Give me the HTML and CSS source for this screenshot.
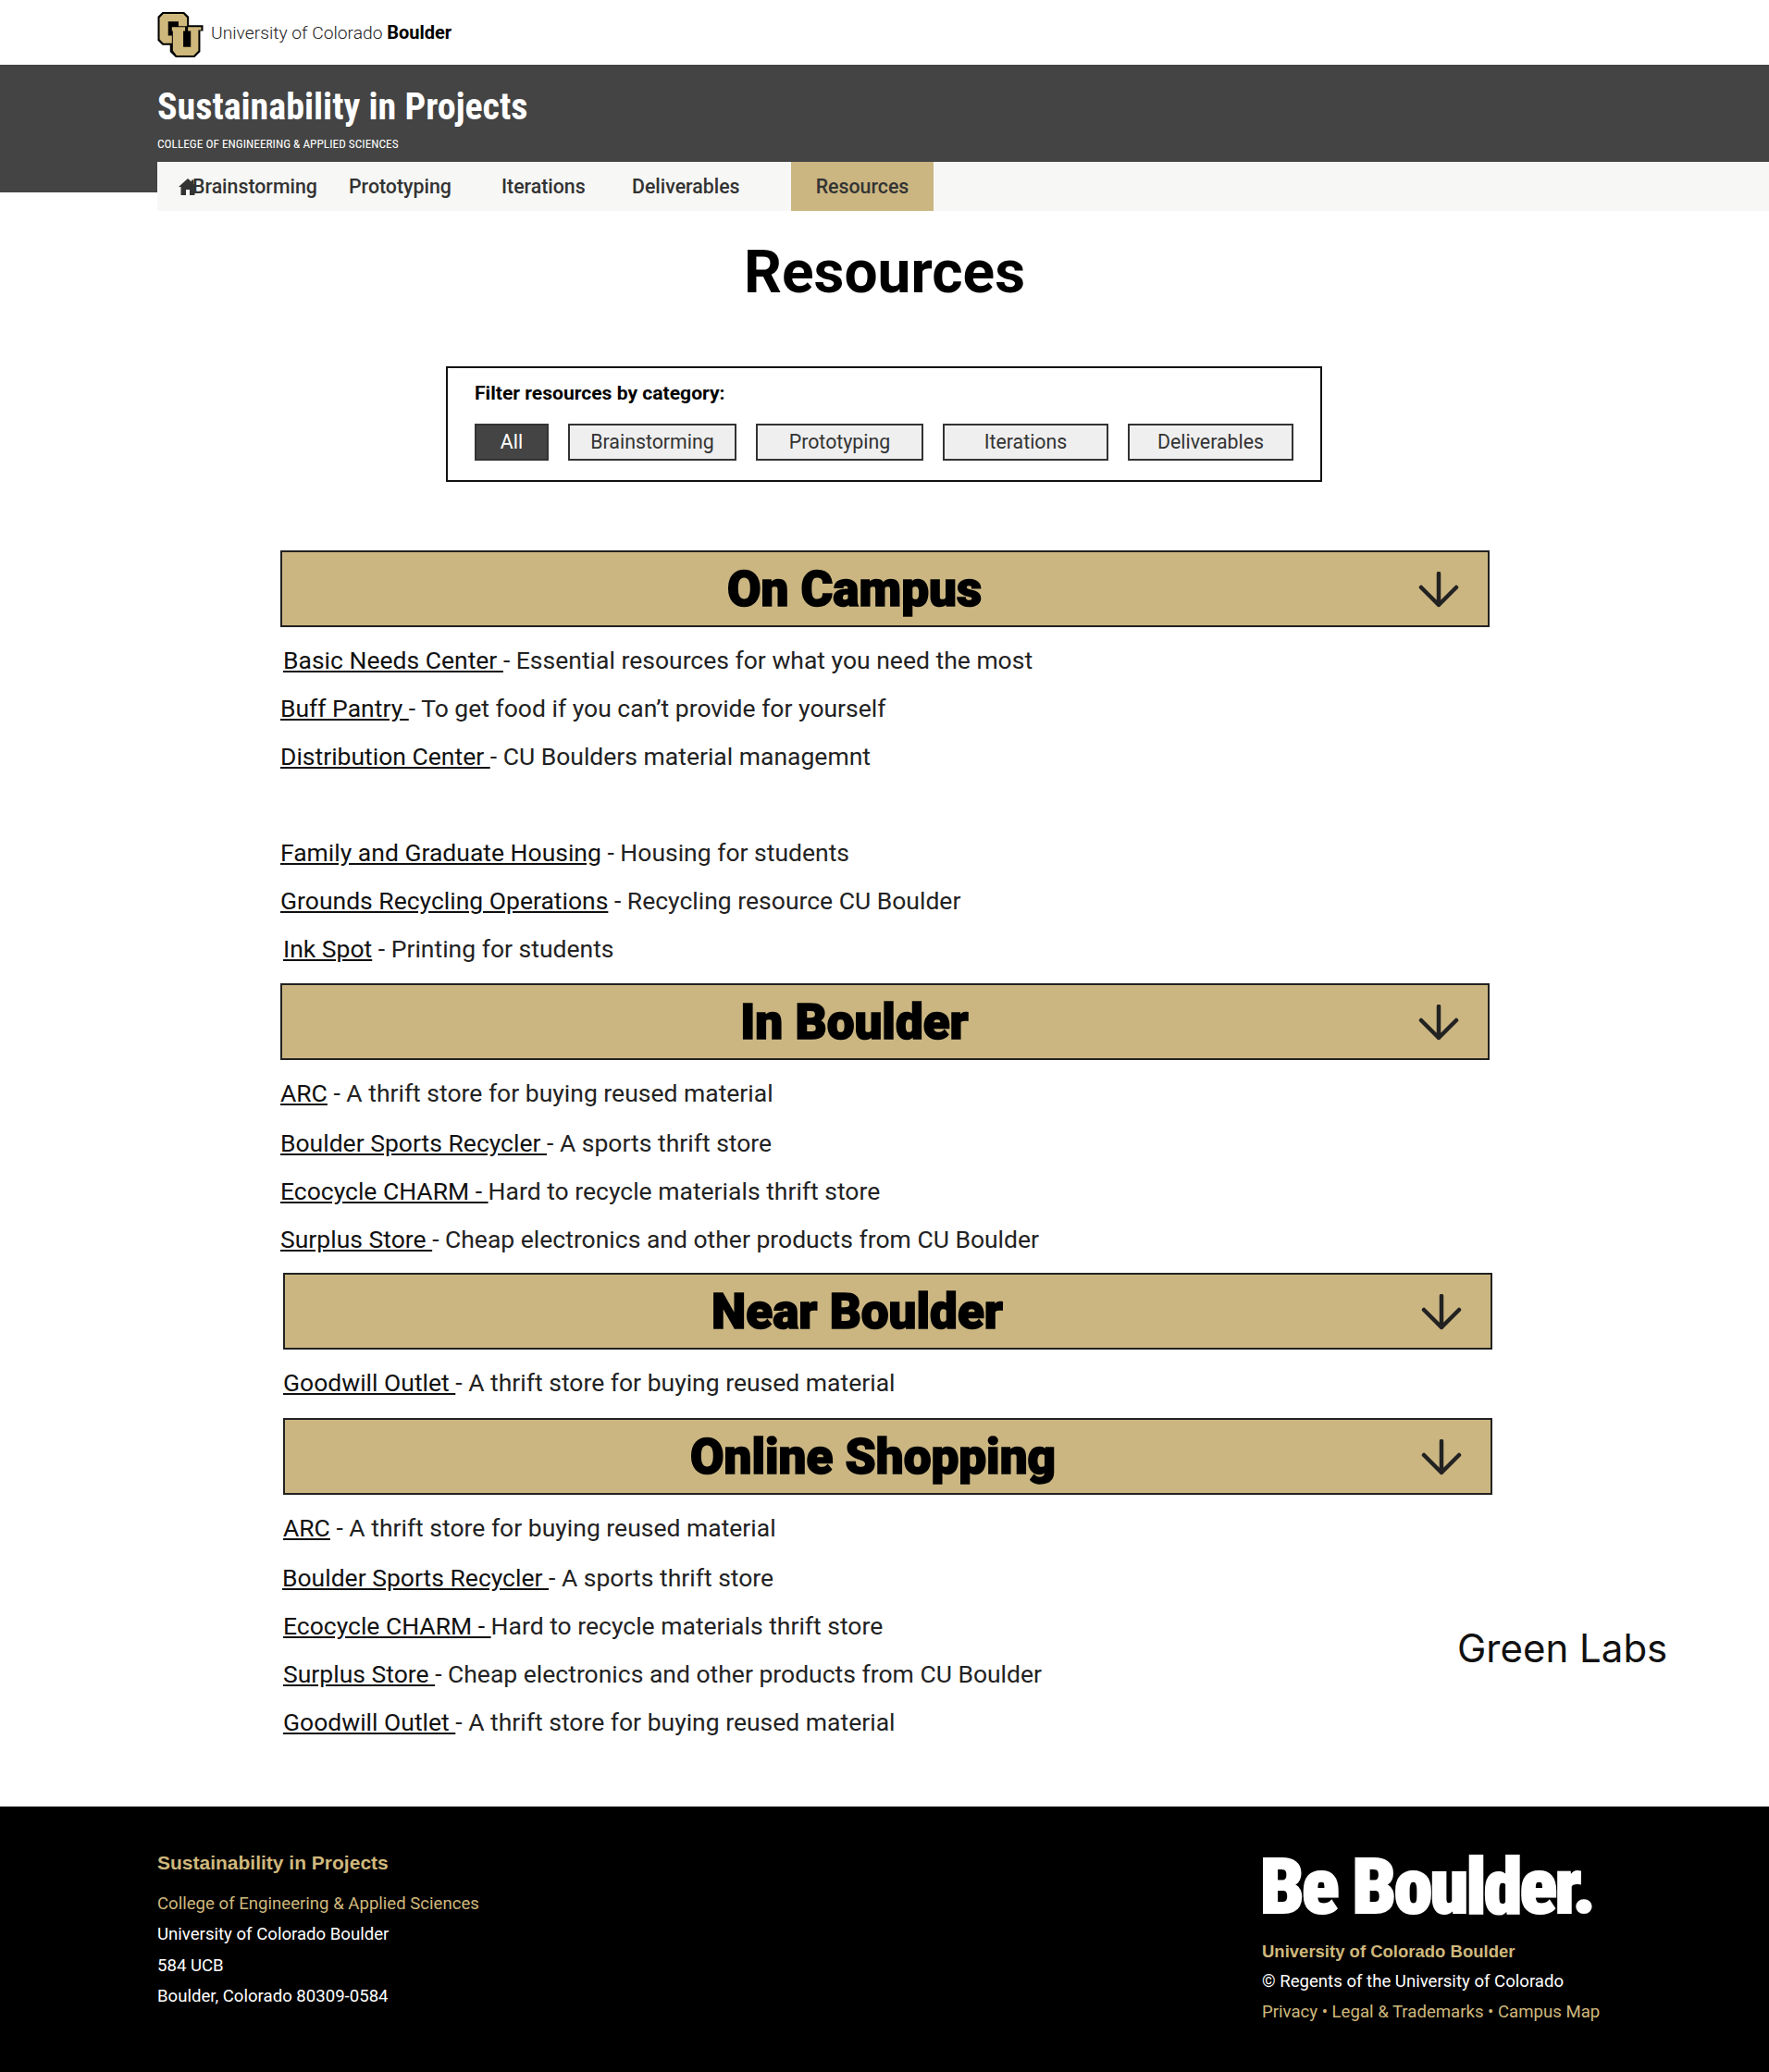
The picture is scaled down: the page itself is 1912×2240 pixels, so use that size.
FILE: index.html
```html
<!DOCTYPE html>
<html lang="en">
<head>
<meta charset="utf-8">
<title>Resources | Sustainability in Projects</title>
<link rel="stylesheet" href="styles.css">
</head>
<body>
<div class="brand-bar">
  <svg class="cu-logo" viewBox="0 0 48 48" aria-hidden="true">
    <path d="M5 0H28L33 5V14H48V20H45V42L39 48H19L13 42V35H5L0 30V5Z" fill="#000"/>
    <path d="M6 2H27L31 6V15H22V10H11V25H15V33H6L2 29V6Z" fill="#cfb87c"/>
    <path d="M15 16H29V20H27V37H35V20H32V16H46V19H43V41L38 46H20L16 41V20H15Z" fill="#cfb87c"/>
  </svg>
  <span class="brand-text">University of Colorado <b>Boulder</b></span>
</div>
<header class="site-head">
  <h2 class="site-title">Sustainability in Projects</h2>
  <p class="site-sub">COLLEGE OF ENGINEERING &amp; APPLIED SCIENCES</p>
</header>
<nav class="nav-row">
  <svg class="home" viewBox="0 0 20 18" aria-hidden="true"><path d="M10 0 14 3.600V1.500H16.500V5.800L20 9H17.500V18H12V12H8V18H2.500V9H0Z" fill="#333"/></svg>
  <a class="nav-a n1">Brainstorming</a>
  <a class="nav-a n2">Prototyping</a>
  <a class="nav-a n3">Iterations</a>
  <a class="nav-a n4">Deliverables</a>
  <a class="nav-a n5">Resources</a>
</nav>
<main class="page">
  <h1 class="page-title">Resources</h1>
  <div class="filter">
    <p class="filter-label">Filter resources by category:</p>
    <div class="filter-btns">
      <span class="btn on b-all">All</span>
      <span class="btn b-br">Brainstorming</span>
      <span class="btn b-pr">Prototyping</span>
      <span class="btn b-it">Iterations</span>
      <span class="btn b-de">Deliverables</span>
    </div>
  </div>

  <section class="sec sec-campus">
    <div class="bar"><h2>On Campus</h2><svg class="arrow" viewBox="0 0 44 40"><path d="M22 2v34M3 17l19 19 19-19" fill="none" stroke="#222" stroke-width="4.500" stroke-linecap="round" stroke-linejoin="round"/></svg></div>
    <p class="row in"><a>Basic Needs Center </a>- Essential resources for what you need the most</p>
    <p class="row"><a>Buff Pantry </a>- To get food if you can’t provide for yourself</p>
    <p class="row"><a>Distribution Center </a>- CU Boulders material managemnt</p>
    <p class="row blank">&nbsp;</p>
    <p class="row"><a>Family and Graduate Housing</a> - Housing for students</p>
    <p class="row"><a>Grounds Recycling Operations</a> - Recycling resource CU Boulder</p>
    <p class="row in"><a>Ink Spot</a> - Printing for students</p>
  </section>

  <section class="sec sec-town">
    <div class="bar"><h2>In Boulder</h2><svg class="arrow" viewBox="0 0 44 40"><path d="M22 2v34M3 17l19 19 19-19" fill="none" stroke="#222" stroke-width="4.500" stroke-linecap="round" stroke-linejoin="round"/></svg></div>
    <p class="row"><a>ARC</a> - A thrift store for buying reused material</p>
    <p class="row drop"><a>Boulder Sports Recycler </a>- A sports thrift store</p>
    <p class="row"><a>Ecocycle CHARM - </a>Hard to recycle materials thrift store</p>
    <p class="row"><a>Surplus Store </a>- Cheap electronics and other products from CU Boulder</p>
  </section>

  <section class="sec sec-near">
    <div class="bar"><h2>Near Boulder</h2><svg class="arrow" viewBox="0 0 44 40"><path d="M22 2v34M3 17l19 19 19-19" fill="none" stroke="#222" stroke-width="4.500" stroke-linecap="round" stroke-linejoin="round"/></svg></div>
    <p class="row"><a>Goodwill Outlet </a>- A thrift store for buying reused material</p>
  </section>

  <section class="sec sec-online">
    <div class="bar bar-wide"><h2>Online Shopping</h2><svg class="arrow" viewBox="0 0 44 40"><path d="M22 2v34M3 17l19 19 19-19" fill="none" stroke="#222" stroke-width="4.500" stroke-linecap="round" stroke-linejoin="round"/></svg></div>
    <p class="row"><a>ARC</a> - A thrift store for buying reused material</p>
    <p class="row drop out"><a>Boulder Sports Recycler </a>- A sports thrift store</p>
    <p class="row"><a>Ecocycle CHARM - </a>Hard to recycle materials thrift store</p>
    <p class="row"><a>Surplus Store </a>- Cheap electronics and other products from CU Boulder</p>
    <p class="row"><a>Goodwill Outlet </a>- A thrift store for buying reused material</p>
    <p class="green-labs">Green Labs</p>
  </section>
</main>
<footer class="foot">
  <div class="foot-l">
    <p class="foot-h">Sustainability in Projects</p>
    <p class="gold">College of Engineering &amp; Applied Sciences</p>
    <p>University of Colorado Boulder</p>
    <p>584 UCB</p>
    <p>Boulder, Colorado 80309-0584</p>
  </div>
  <div class="foot-r">
    <p class="be">Be Boulder.</p>
    <p class="foot-h2">University of Colorado Boulder</p>
    <p>© Regents of the University of Colorado</p>
    <p class="gold">Privacy • Legal &amp; Trademarks • Campus Map</p>
  </div>
</footer>
</body>
</html>
```
FILE: styles.css
```css
* { box-sizing: border-box; }
html, body { margin: 0; padding: 0; background: #fff; }
body { font-family: Roboto, "Liberation Sans", sans-serif; color: #111; width: 1912px; height: 2240px; overflow: hidden; }
p, h1, h2 { margin: 0; }

.brand-bar { height: 70px; padding-left: 170px; display: flex; align-items: center; gap: 8px; }
.cu-logo { width: 50px; height: 49px; margin-top: 4px; }
.brand-text { font-family: Roboto, sans-serif; font-weight: 300; font-size: 19.25px; color: #222; }
.brand-text b { color: #000; font-weight: 700; font-size: 20px; }

.site-head { height: 138px; margin-bottom: -33px; background: #444; padding: 24px 0 0 170px; color: #fff; }
.site-title { font-size: 40px; font-weight: 700; line-height: 44px; font-stretch: 75%; }
.site-sub { font-size: 13.33px; line-height: 14px; margin-top: 11px; font-stretch: 75%; }

.nav-row { position: relative; margin-left: 170px; height: 53px; background: #f7f7f5; display: flex; align-items: center; }
.home { position: absolute; left: 23px; top: 18px; width: 20px; height: 18px; }
.nav-a { font-size: 21.33px; font-weight: 500; color: #333; height: 53px; line-height: 53px; }
.n1 { margin-left: 38px; width: 169px; }
.n2 { width: 165px; }
.n3 { width: 141px; }
.n4 { width: 172px; }
.n5 { width: 154px; background: #cbb682; text-align: center; }

.page { position: relative; height: 1725px; }
.page-title { font-size: 64px; font-weight: 700; line-height: 75px; text-align: center; color: #000; padding-top: 29px; height: 104px; }

.filter { width: 947px; height: 125px; margin: 64px 0 0 482px; border: 2px solid #111; padding: 14px 29px; }
.filter-label { font-size: 21.1px; font-weight: 700; line-height: 26px; color: #000; }
.filter-btns { display: flex; margin-top: 20px; gap: 21px; }
.btn { height: 40px; border: 2px solid #333; background: #efefef; color: #333; font-size: 21.33px; line-height: 36px; text-align: center; }
.btn.on { background: #444; color: #fff; }
.b-all { width: 80px; }
.b-br { width: 182px; }
.b-pr { width: 181px; }
.b-it { width: 179px; }
.b-de { width: 179px; }

.sec { width: 1307px; margin-left: 303px; }
.sec-campus { margin-top: 74px; }
.sec-town { margin-top: 21px; }
.sec-near { margin-top: 20px; }
.sec-online { margin-top: 22px; }
.sec-near, .sec-online { margin-left: 306px; }
.bar { position: relative; height: 83px; background: #cbb682; border: 2px solid #222; display: flex; align-items: center; justify-content: center; padding-right: 66px; }
.bar-wide { padding-right: 32px; }
.bar h2 { font-size: 53px; font-weight: 900; line-height: 60px; color: #000; -webkit-text-stroke: 1.6px #000; }
.arrow { position: absolute; right: 31px; top: 21px; width: 44px; height: 40px; }
.row { font-size: 26.5px; line-height: 32px; height: 52px; padding-top: 20px; color: #222; }
.row a { color: #111; text-decoration: underline; }
.row.in { padding-left: 3px; }
.row.drop { margin-top: 2px; }
.row.out { margin-left: -1px; }
.green-labs { position: absolute; left: 1575px; top: 1529px; font-family: Inter, Roboto, sans-serif; font-size: 42px; line-height: 50px; color: #111; }

.foot { height: 287px; background: #000; color: #fff; padding: 0 0 0 170px; display: flex; font-size: 18.6px; }
.foot-l { width: 1195px; padding-top: 44px; }
.foot-l p { line-height: 33.4px; }
.foot-r { padding-top: 52px; margin-left: -1px; }
.foot-r p { line-height: 33px; }
.foot .gold { color: #cfb87c; }
.foot-l .foot-h { font-family: "Liberation Sans", Arial, sans-serif; font-weight: 700; font-size: 21px; color: #cfb87c; line-height: 34px; margin-bottom: 11px; }
.foot-r .be { font-family: Roboto, sans-serif; font-size: 84px; font-weight: 900; font-stretch: 75%; letter-spacing: -2.7px; -webkit-text-stroke: 2px #fff; line-height: 68px; margin: 1px 0 19px -2px; }
.foot-r .foot-h2 { font-family: "Liberation Sans", Arial, sans-serif; font-weight: 700; font-size: 18.5px; color: #cfb87c; }
```
